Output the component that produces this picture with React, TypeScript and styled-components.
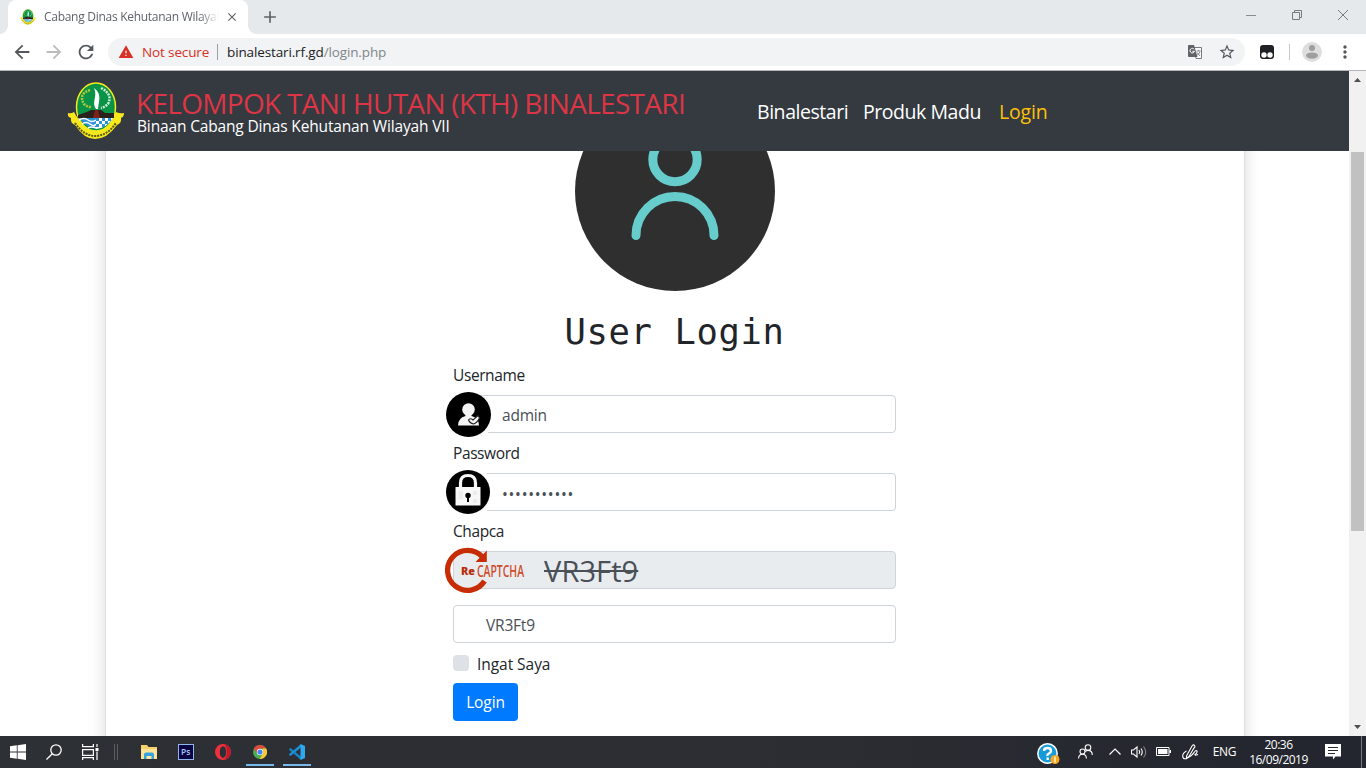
import React from "react";
import styled, { createGlobalStyle } from "styled-components";
import {
  MdAdd, MdArrowBack, MdArrowForward, MdClose, MdMoreVert, MdRefresh, MdStarBorder, MdWarning,
} from "react-icons/md";

const GlobalStyle = createGlobalStyle`
  *, *::before, *::after { box-sizing: border-box; }
  html, body { margin: 0; padding: 0; overflow: hidden; }
  body { font-family: "Open Sans", "Noto Sans", sans-serif; font-size: 16px; line-height: 1.5; color: #212529; background: #fff; }
`;

const Screen = styled.div`
  width: 1366px;
  height: 768px;
  display: flex;
  flex-direction: column;
  overflow: hidden;
`;

/* ---------- browser chrome ---------- */
const TabStrip = styled.header`
  height: 34px;
  flex: none;
  display: flex;
  align-items: stretch;
  background: #e5e9ec;
  padding-left: 8px;
  color: #5f6368;
`;
const Tab = styled.div`
  position: relative;
  width: 240px;
  background: #fff;
  border-radius: 8px 8px 0 0;
  display: flex;
  align-items: center;
  padding: 0 8px 0 12px;
  &::before, &::after {
    content: "";
    position: absolute;
    bottom: 0;
    width: 8px;
    height: 8px;
  }
  &::before { left: -8px; background: radial-gradient(circle at 0 0, #e5e9ec 7.5px, #fff 8px); }
  &::after { right: -8px; background: radial-gradient(circle at 100% 0, #e5e9ec 7.5px, #fff 8px); }
`;
const TabTitle = styled.span`
  width: 176px;
  margin-left: 8px;
  font-size: 12px;
  letter-spacing: -0.28px;
  white-space: nowrap;
  overflow: hidden;
  mask-image: linear-gradient(90deg, #000 155px, transparent 175px);
`;
const TabClose = styled.span`
  margin-left: 5px;
  display: flex;
`;
const NewTab = styled.span`
  width: 44px;
  display: flex;
  align-items: center;
  justify-content: center;
`;
const WindowControls = styled.div`
  margin-left: auto;
  display: flex;
  padding-bottom: 5px;
`;
const WindowButton = styled.span`
  width: 46px;
  display: flex;
  align-items: center;
  justify-content: center;
`;
const Toolbar = styled.div`
  height: 37px;
  flex: none;
  display: flex;
  align-items: center;
  background: #fff;
  border-bottom: 1px solid #b3b5b8;
  padding-left: 6px;
  color: #5f6368;
`;
const ToolButton = styled.span<{ $dim?: boolean; $w?: number }>`
  width: ${(p) => p.$w ?? 32}px;
  display: flex;
  align-items: center;
  justify-content: center;
  color: ${(p) => (p.$dim ? "#babcbe" : "#54585d")};
`;
const AddressBar = styled.div`
  width: 1137px;
  height: 28px;
  margin-left: 6px;
  border-radius: 14px;
  background: #f1f3f4;
  display: flex;
  align-items: center;
  padding-left: 10px;
  padding-right: 2px;
  font-size: 13.5px;
  white-space: nowrap;
`;
const NotSecure = styled.span`
  color: #d93025;
  margin-left: 8px;
  width: 67px;
  letter-spacing: -0.13px;
`;
const AddressDivider = styled.i`
  width: 1px;
  height: 16px;
  margin: 0 9px 0 8px;
  background: #9aa0a6;
`;
const Address = styled.span`
  color: #202124;
  letter-spacing: -0.13px;
  span { color: #80868b; }
`;
const AddressActions = styled.div`
  margin-left: auto;
  display: flex;
`;
const ToolDivider = styled.i`
  width: 1px;
  height: 16px;
  margin: 0 3px 0 0;
  background: #c8cacc;
`;

/* ---------- page ---------- */
const Viewport = styled.div`
  height: 665px;
  flex: none;
  display: flex;
`;
const Page = styled.main`
  width: 1349px;
  display: flex;
  flex-direction: column;
  overflow: hidden;
`;
const Navbar = styled.nav`
  height: 80px;
  flex: none;
  display: flex;
  align-items: center;
  padding-left: 67px;
  background: #343a40;
`;
const Brand = styled.div`
  width: 620px;
  margin-left: 12px;
  padding-top: 1px;
  white-space: nowrap;
`;
const BrandName = styled.div`
  color: #dc3545;
  font-size: 28px;
  line-height: 28px;
  letter-spacing: -0.69px;
  margin-left: -1px;
`;
const BrandSub = styled.div`
  color: #fff;
  font-size: 15.5px;
  line-height: 18px;
  letter-spacing: -0.15px;
`;
const NavLinks = styled.div`
  display: flex;
  gap: 16px;
  padding-top: 2px;
`;
const NavLink = styled.a<{ $w: number; $active?: boolean }>`
  width: ${(p) => p.$w}px;
  white-space: nowrap;
  font-size: 19.5px;
  letter-spacing: ${(p) => (p.$active ? "-0.15px" : "-0.45px")};
  color: ${(p) => (p.$active ? "#ffc107" : "#fff")};
`;
const Scroller = styled.div`
  flex: 1;
  min-height: 0;
  overflow: hidden;
  background: #fff;
`;
const Card = styled.section`
  width: 1140px;
  height: 900px;
  margin: -101px auto 0;
  padding-top: 40px;
  border: 1px solid rgba(0, 0, 0, 0.125);
  border-radius: 4px;
  background: #fff;
  box-shadow: 0 8px 16px rgba(0, 0, 0, 0.15);
  display: flex;
  flex-direction: column;
  align-items: center;
`;
const Avatar = styled.svg`
  display: block;
  width: 200px;
  height: 200px;
  flex: none;
`;
const Title = styled.h1`
  margin: 16px 0 8px;
  height: 48px;
  font: 400 35.5px/50px "DejaVu Sans Mono", monospace;
  letter-spacing: 0.63px;
  color: #212529;
`;
const Form = styled.form`
  width: 443px;
`;
const Label = styled.label`
  display: block;
  height: 24px;
  margin-bottom: 8px;
  font-size: 15.5px;
  line-height: 25px;
  letter-spacing: -0.4px;
`;
const Field = styled.div<{ $gap?: number }>`
  position: relative;
  height: 38px;
  margin-bottom: ${(p) => p.$gap ?? 8}px;
`;
const FieldIcon = styled.svg`
  position: absolute;
  left: -8px;
  top: -4px;
`;
const Input = styled.input<{ $indent: number }>`
  display: block;
  width: 100%;
  height: 38px;
  padding: 3px 12px 1px ${(p) => p.$indent}px;
  border: 1px solid #ced4da;
  border-radius: 4px;
  background: #fff;
  color: #495057;
  font: 400 15.5px "Open Sans", sans-serif;
  letter-spacing: -0.2px;
  outline: none;
`;
const PasswordInput = styled(Input)`
  padding-top: 4px;
  padding-bottom: 0;
  letter-spacing: 0.72px;
`;
const CodeInput = styled(Input)`
  padding-top: 0;
  padding-bottom: 0;
  background: #e9ecef;
  font-size: 29px;
  letter-spacing: 0.1px;
  text-decoration: line-through;
`;
const Remember = styled.label`
  display: flex;
  align-items: center;
  height: 24px;
  margin-bottom: 8px;
  gap: 8px;
  font-size: 15.5px;
  line-height: 24px;
  letter-spacing: -0.05px;
  span { padding-top: 2px; }
`;
const Check = styled.i`
  width: 16px;
  height: 16px;
  border-radius: 4px;
  background: #dee2e6;
`;
const Submit = styled.button`
  width: 65px;
  height: 38px;
  padding: 0;
  border: 0;
  border-radius: 4px;
  background: #007bff;
  color: #fff;
  font: 400 15.5px "Open Sans", sans-serif;
  letter-spacing: -0.1px;
`;
const Scrollbar = styled.aside`
  width: 17px;
  background: #f1f1f1;
  display: flex;
  flex-direction: column;
  align-items: center;
  justify-content: space-between;
  padding: 6px 0;
`;
const Thumb = styled.i`
  width: 13px;
  height: 379px;
  margin: 70px 0 auto;
  background: #c1c1c1;
`;

/* ---------- taskbar ---------- */
const Taskbar = styled.footer`
  height: 32px;
  flex: none;
  display: flex;
  background: linear-gradient(90deg, #2d3034, #2b2d32 60%, #23252f);
  color: #fff;
`;
const TaskCell = styled.div<{ $w: number; $open?: boolean; $drop?: number }>`
  position: relative;
  width: ${(p) => p.$w}px;
  display: flex;
  align-items: center;
  justify-content: center;
  padding-top: ${(p) => p.$drop ?? 0}px;
  padding-bottom: 1px;
  &::after {
    content: "";
    display: ${(p) => (p.$open ? "block" : "none")};
    position: absolute;
    left: 5px;
    width: 28px;
    height: 2px;
    bottom: 2px;
    background: #76b9ed;
  }
`;
const Grip = styled.i`
  width: 4px;
  height: 16px;
  margin: 8px 12px 0 6px;
  border: solid #5c5e61;
  border-width: 0 1px;
`;
const Tray = styled.div`
  margin-left: auto;
  display: flex;
`;
const Language = styled.span`
  font-size: 12px;
  letter-spacing: -0.3px;
`;
const Clock = styled.div`
  width: 66px;
  padding: 1px 0 0 1px;
  text-align: center;
  font-size: 12px;
  line-height: 15px;
  letter-spacing: -0.5px;
  white-space: nowrap;
`;
const DesktopEdge = styled.i`
  width: 5px;
  margin-left: 6px;
  border-left: 1px solid #777a80;
`;

const Crest = ({ size }: { size: number }) => (
  <svg width={size} height={size} viewBox="0 0 58 58">
    <path d="M1 31 Q4 32 7 30 Q16 47 28 48 Q40 47 49 30 Q53 32 57 31 Q57 35 54 36 Q55 41 50 43 Q40 57 28 57 Q17 57 8 43 Q3 41 4 36 Q0 35 1 31Z" fill="#f7e81d" />
    <path d="M8 41 Q17 54 28 54 Q40 54 49 41" fill="none" stroke="#5a5a13" strokeWidth="2" strokeDasharray="2 1" />
    <ellipse cx="29" cy="25" rx="19.5" ry="24" fill="#079447" stroke="#f7ea1e" strokeWidth="1.5" />
    <path d="M11 33 L20 30 L24 28 L34 28 L38 31 L47 31 L47 36 L11 36Z" fill="#2b211c" />
    <path d="M26 36 L28 28 L31 28 L33 36Z" fill="#7c2219" />
    <path d="M29 27 C24 20 31 15 27 6 C35 12 32 18 31 27Z" fill="#fff" />
    <path d="M23 8 Q11 12 17 22 Q20 25 24 25" fill="none" stroke="#b9c53b" strokeWidth="2.500" strokeDasharray="2 1" />
    <path d="M34 6 Q46 12 41 22 Q38 25 34 26" fill="none" stroke="#d7e8d8" strokeWidth="2.500" strokeDasharray="2 1" />
    <path d="M12 36 H29 V47 Q18 45 12 36Z" fill="#2b93d5" />
    <path d="M12 38 Q17 35 21 38 T29 38 M15 42 Q19 39 23 42 T29 42 M21 46 Q25 44 29 46" fill="none" stroke="#fff" strokeWidth="1.500" />
    <path d="M29 36 H46 Q40 46 29 47Z" fill="#fff" />
    <path d="M29 36h3v3h-3zM35 36h3v3h-3zM41 36h3v3h-3zM32 39h3v3h-3zM38 39h3v3h-3zM29 42h3v3h-3zM35 42h3v3h-3z" fill="#2b93d5" />
  </svg>
);

const UserBadge = () => (
  <FieldIcon width="47" height="47" viewBox="0 0 47 47">
    <path d="M5 5H43V43H5Z" fill="#fafafa" />
    <circle cx="23.500" cy="23.500" r="22.500" fill="#000" />
    <circle cx="23.500" cy="18.500" r="6.300" fill="#f4f4f4" />
    <path d="M20.500 22 H26.500 V25 Q34 27 34 34.500 H13 Q13 27 20.500 25Z" fill="#f4f4f4" />
    <path d="M23.500 29 Q25 26.500 28 29 L33 24.500 L34.500 27 Q32 32 28.500 33 Q25 32.500 23.500 29Z" fill="#f4f4f4" stroke="#222" strokeWidth="1.100" />
  </FieldIcon>
);

const LockBadge = () => (
  <FieldIcon width="47" height="47" viewBox="0 0 47 47">
    <path d="M4 4H42V42H4Z" fill="#fafafa" />
    <circle cx="23" cy="23" r="22" fill="#000" />
    <path d="M15.500 19 V14 Q15.500 6.500 23 6.500 Q30.500 6.500 30.500 14 V19" fill="none" stroke="#f7f7f7" strokeWidth="3.200" />
    <rect x="10.500" y="18" width="25" height="18.500" fill="#f7f7f7" />
    <path d="M14 22h4v4h-4zM28 22h4v4h-4zM18 26h-4v4h4zM28 30h4v4h-4z" fill="#ececec" />
    <circle cx="23" cy="26.500" r="2.700" fill="#000" />
    <path d="M22 27h2v6h-2z" fill="#000" />
  </FieldIcon>
);

const CaptchaBadge = () => (
  <FieldIcon width="84" height="47" viewBox="0 0 84 47">
    <path d="M39.500 34 A20 20 0 1 1 37.500 10" fill="none" stroke="#c72d04" strokeWidth="5.300" />
    <path d="M41.800 3.500 V15 H30.500Z" fill="#c72d04" />
    <text x="16" y="27.500" fontFamily="Open Sans, sans-serif" fontSize="10.500" fontWeight="800" fill="#b62d0c" textLength="14" lengthAdjust="spacingAndGlyphs">Re</text>
    <text x="32" y="29.800" fontFamily="Open Sans, sans-serif" fontSize="15.500" fontWeight="600" fill="#ce4c2b" textLength="47" lengthAdjust="spacingAndGlyphs">CAPTCHA</text>
  </FieldIcon>
);

export default function App() {
  return (
    <Screen>
      <GlobalStyle />
      <TabStrip>
        <Tab>
          <Crest size={16} />
          <TabTitle>Cabang Dinas Kehutanan Wilayah</TabTitle>
          <TabClose><MdClose size={14} /></TabClose>
        </Tab>
        <NewTab><MdAdd size={20} /></NewTab>
        <WindowControls>
          <WindowButton><svg width="10" height="10"><path d="M0 5.500H10" stroke="#888c90" /></svg></WindowButton>
          <WindowButton><svg width="10" height="10" fill="none" stroke="#777b7f"><path d="M.5 2.500H7.500V9.500H.5ZM2.500 2.500V.5H9.500V7.500H7.500" /></svg></WindowButton>
          <WindowButton><svg width="10" height="10" stroke="#777b7f"><path d="M0 0L10 10M10 0L0 10" /></svg></WindowButton>
        </WindowControls>
      </TabStrip>
      <Toolbar>
        <ToolButton><MdArrowBack size={22} /></ToolButton>
        <ToolButton $dim><MdArrowForward size={22} /></ToolButton>
        <ToolButton><MdRefresh size={22} /></ToolButton>
        <AddressBar>
          <MdWarning size={16} color="#d93025" />
          <NotSecure>Not secure</NotSecure>
          <AddressDivider />
          <Address>binalestari.rf.gd<span>/login.php</span></Address>
          <AddressActions>
            <ToolButton>
              <svg width="15" height="15" viewBox="0 0 15 15">
                <path d="M6 2.500H13.500V13.500H8Z" fill="#fafafa" stroke="#777b80" />
                <path d="M8.500 6H12.500M10.500 5V6M12 6.500Q11 9.500 8.500 10.500M9 7.500L12 11" fill="none" stroke="#777b80" strokeWidth=".9" />
                <path d="M1 0H6L9.500 12H1Q0 12 0 11V1Q0 0 1 0Z" fill="#5f6368" />
                <path d="M6.200 4.400A2.300 2.300 0 1 0 6.500 6.300H4.300" fill="none" stroke="#fff" />
              </svg>
            </ToolButton>
            <ToolButton><MdStarBorder size={18} /></ToolButton>
          </AddressActions>
        </AddressBar>
        <ToolButton $w={44}>
          <svg width="14" height="14"><rect width="14" height="14" rx="3" fill="#202124" /><circle cx="4" cy="10" r="2.700" fill="#fff" /><circle cx="10" cy="10" r="2.700" fill="#fff" /></svg>
        </ToolButton>
        <ToolDivider />
        <ToolButton $w={38}>
          <svg width="20" height="20"><circle cx="10" cy="10" r="10" fill="#dedede" /><circle cx="10" cy="6" r="3" fill="#9e9e9e" /><ellipse cx="10" cy="13.600" rx="6" ry="3.200" fill="#9e9e9e" /></svg>
        </ToolButton>
        <ToolButton $w={27}><MdMoreVert size={20} /></ToolButton>
      </Toolbar>

      <Viewport>
        <Page>
          <Navbar>
            <Crest size={58} />
            <Brand>
              <BrandName>KELOMPOK TANI HUTAN (KTH) BINALESTARI</BrandName>
              <BrandSub>Binaan Cabang Dinas Kehutanan Wilayah VII</BrandSub>
            </Brand>
            <NavLinks>
              <NavLink $w={90}>Binalestari</NavLink>
              <NavLink $w={120}>Produk Madu</NavLink>
              <NavLink $w={50} $active>Login</NavLink>
            </NavLinks>
          </Navbar>
          <Scroller>
            <Card>
              <Avatar viewBox="0 0 200 200">
                <circle cx="100" cy="100" r="100" fill="#2f2f2f" />
                <g fill="none" stroke="#66cccc" strokeWidth="9" strokeLinecap="round">
                  <circle cx="100" cy="68.500" r="22.200" />
                  <path d="M61 144.500A39 39 0 0 1 139 144.500" />
                </g>
              </Avatar>
              <Title>User Login</Title>
              <Form>
                <Label>Username</Label>
                <Field><Input $indent={48} readOnly defaultValue="admin" /><UserBadge /></Field>
                <Label>Password</Label>
                <Field><PasswordInput $indent={48} type="password" readOnly defaultValue="binalestari" /><LockBadge /></Field>
                <Label>Chapca</Label>
                <Field $gap={16}><CodeInput $indent={90} readOnly defaultValue="VR3Ft9" /><CaptchaBadge /></Field>
                <Field><Input $indent={32} readOnly defaultValue="VR3Ft9" /></Field>
                <Remember><Check /><span>Ingat Saya</span></Remember>
                <Submit type="button">Login</Submit>
              </Form>
            </Card>
          </Scroller>
        </Page>
        <Scrollbar>
          <svg width="7" height="5"><path d="M0 5L3.500 1L7 5Z" fill="#505050" /></svg>
          <Thumb />
          <svg width="7" height="5"><path d="M0 0L3.500 4L7 0Z" fill="#505050" /></svg>
        </Scrollbar>
      </Viewport>

      <Taskbar>
        <TaskCell $w={36}><svg width="16" height="16" fill="#fff"><path d="M0 2.200L6.800 1.300V7.600H0ZM7.600 1.200L16 0V7.600H7.600ZM0 8.400H6.800V14.700L0 13.800ZM7.600 8.400H16V16L7.600 14.800Z" /></svg></TaskCell>
        <TaskCell $w={36}><svg width="16" height="16" fill="none" stroke="#fff" strokeWidth="1.300"><circle cx="10" cy="6" r="5.200" /><path d="M6.300 9.700L.5 15.500" /></svg></TaskCell>
        <TaskCell $w={36}><svg width="17" height="16" fill="none" stroke="#fff" strokeWidth="1.200"><path d="M.6 0V2.600H11.400V0M.6 5.600H11.400V11.400H.6ZM.6 16V13.600H11.400V16M15 0V3M15 7.500V16" /><path d="M13.500 4H16.500V7H13.500Z" fill="#fff" stroke="none" /></svg></TaskCell>
        <Grip />
        <TaskCell $w={37}>
          <svg width="16" height="16"><path d="M0 1H6L7.500 3H16V15H0Z" fill="#f8d16a" /><path d="M0 5H16V15H0Z" fill="#ffe39a" /><path d="M3 15V10.500Q3 8.500 5 8.500H11Q13 8.500 13 10.500V15H10.500V12H5.500V15Z" fill="#35a3dd" /></svg>
        </TaskCell>
        <TaskCell $w={37}>
          <svg width="16" height="16"><rect x=".5" y=".5" width="15" height="15" fill="#0a0443" stroke="#8cb6ec" /><text x="3" y="11" fill="#a8c9f5" fontFamily="Open Sans, sans-serif" fontSize="8.500" fontWeight="600">Ps</text></svg>
        </TaskCell>
        <TaskCell $w={37}>
          <svg width="16" height="16"><path fillRule="evenodd" d="M8 0A8 8 0 1 0 8 16A8 8 0 1 0 8 0ZM8 2.200C10 2.200 11.200 5 11.200 8S10 13.800 8 13.800S4.800 11 4.800 8S6 2.200 8 2.200Z" fill="#f0303c" /><path d="M9 .1A8 8 0 0 1 9 15.900C13 13 13 3 9 .1Z" fill="#bb1828" /></svg>
        </TaskCell>
        <TaskCell $w={37} $open>
          <svg width="14" height="14" viewBox="0 0 14 14"><circle cx="7" cy="7" r="7" fill="#4aaf50" /><path d="M.9 3.500A7 7 0 0 1 13.100 3.500H7L4.200 8.500Z" fill="#e04a3c" /><path d="M13.100 3.500A7 7 0 0 1 6.500 14L10 8.700L9.500 3.500Z" fill="#fdc92f" /><circle cx="7" cy="7" r="3.200" fill="#fff" /><circle cx="7" cy="7" r="2.600" fill="#4285f4" /></svg>
        </TaskCell>
        <TaskCell $w={37} $open>
          <svg width="16" height="16" viewBox="0 0 16 16"><path d="M0 5L1.500 4L12 12.500V16L0 5.800Z" fill="#1681c5" /><path d="M0 11L1.500 12L12 3.500V0L0 10.200Z" fill="#1c8fd6" /><path d="M11.500 0L16 2V14L11.500 16Z" fill="#2fa8f0" /></svg>
        </TaskCell>
        <Tray>
          <TaskCell $w={36} $drop={4}>
            <svg width="23" height="22"><circle cx="10.500" cy="10.500" r="9.700" fill="#159bd7" stroke="#fff" strokeWidth="1.500" /><path d="M7 8Q7 5 10.500 5T14 8Q14 9.500 12 10.500T10.700 13M10.700 14.500V17" fill="none" stroke="#fff" strokeWidth="2.400" /><circle cx="18" cy="16.500" r="4.500" fill="#f5a81c" /><path d="M18 13.500V19.500" stroke="#fff" strokeWidth="1.300" /></svg>
          </TaskCell>
          <TaskCell $w={38}><svg width="15" height="15" fill="none" stroke="#fff" strokeWidth="1.100"><circle cx="10" cy="3.500" r="2.800" /><circle cx="4.500" cy="7.500" r="2.500" /><path d="M.6 14.500Q.6 10.200 4.500 10.200T8.400 14.500M7.300 7.500Q8.500 6.400 10 6.400Q14 6.400 14.400 11" /></svg></TaskCell>
          <TaskCell $w={22}><svg width="12" height="7" fill="none" stroke="#fff" strokeWidth="1.200"><path d="M.5 6.500L6 1L11.500 6.500" /></svg></TaskCell>
          <TaskCell $w={25}><svg width="16" height="14" fill="none" stroke="#fff" strokeWidth="1.100"><path d="M.5 5H2.500L6 2V12L2.500 9H.5Z" /><path d="M8 5Q9.500 7 8 9M10 3.500Q12.500 7 10 10.500" /><path d="M12.500 1.500Q17 7 12.500 12.500" stroke="#85878a" /></svg></TaskCell>
          <TaskCell $w={25}><svg width="15" height="9"><path d="M.5 .5H13V8.500H.5Z" fill="none" stroke="#fff" /><path d="M2 2H11.500V7H2ZM13.500 3H15V6H13.500Z" fill="#fff" /></svg></TaskCell>
          <TaskCell $w={28}><svg width="17" height="16" fill="none" stroke="#fff" strokeWidth="1.100"><path d="M4.500 12L10 2Q11.500 0 12.500 1.500T12 4L7 12.500L4.500 14.500ZM4.500 7Q0 9.500 .8 13Q1.500 15.500 4.500 14.500Q10 12 12.500 8Q13.500 6 15 7Q15.500 9 13 10.500Q12.500 12 16 10.500" /></svg></TaskCell>
          <TaskCell $w={41}><Language>ENG</Language></TaskCell>
          <Clock>20:36<br />16/09/2019</Clock>
          <TaskCell $w={44}><svg width="16" height="16"><path d="M0 0H16V12.500H10.500L8 15.500V12.500H0Z" fill="#fff" /><path d="M3 3.500H13M3 6.500H13M3 9.500H10" stroke="#282a30" /></svg></TaskCell>
          <DesktopEdge />
        </Tray>
      </Taskbar>
    </Screen>
  );
}
